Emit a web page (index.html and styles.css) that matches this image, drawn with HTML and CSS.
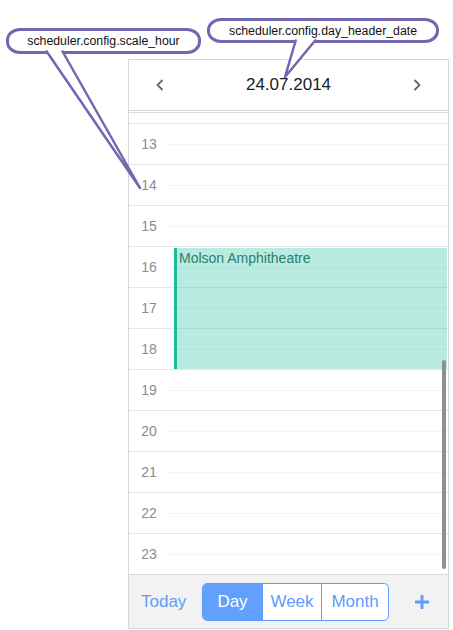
FILE: index.html
```html
<!DOCTYPE html>
<html>
<head>
<meta charset="utf-8">
<link rel="stylesheet" href="styles.css">
</head>
<body>
<div class="scheduler">
  <div class="header">
    <div class="nav"><svg width="8" height="12" viewBox="0 0 8 12"><polyline points="6.5,1 1.5,6 6.5,11" fill="none" stroke="#666" stroke-width="1.8"/></svg></div>
    <div class="date">24.07.2014</div>
    <div class="nav"><svg width="8" height="12" viewBox="0 0 8 12"><polyline points="1.5,1 6.5,6 1.5,11" fill="none" stroke="#666" stroke-width="1.8"/></svg></div>
  </div>
  <div class="body">
    <div class="sep"></div>
    <div class="row partial"></div>
    <div class="row"><div class="hour">13</div><div class="slot"></div></div>
    <div class="row"><div class="hour">14</div><div class="slot"></div></div>
    <div class="row"><div class="hour">15</div><div class="slot"></div></div>
    <div class="row"><div class="hour">16</div><div class="slot"></div></div>
    <div class="row"><div class="hour">17</div><div class="slot"></div></div>
    <div class="row"><div class="hour">18</div><div class="slot"></div></div>
    <div class="row"><div class="hour">19</div><div class="slot"></div></div>
    <div class="row"><div class="hour">20</div><div class="slot"></div></div>
    <div class="row"><div class="hour">21</div><div class="slot"></div></div>
    <div class="row"><div class="hour">22</div><div class="slot"></div></div>
    <div class="row last"><div class="hour">23</div><div class="slot"></div></div>
    <div class="event">Molson Amphitheatre</div>
    <div class="scrollbar"></div>
  </div>
  <div class="footer">
    <div class="today">Today</div>
    <div class="seg">
      <div class="btn day">Day</div>
      <div class="btn week">Week</div>
      <div class="btn month">Month</div>
    </div>
    <div class="plus"><svg width="14" height="14" viewBox="0 0 14 14"><path d="M7 0 V14 M0 7 H14" stroke="#5f9cfb" stroke-width="2.8"/></svg></div>
  </div>
</div>

<div class="callout c1">scheduler.config.scale_hour</div>
<div class="callout c2">scheduler.config.day_header_date</div>
<svg class="tails" width="453" height="630" viewBox="0 0 453 630">
  <path d="M46 50.5 L140 188 L62 50.5" fill="#fff" stroke="#7367b1" stroke-width="2.5" stroke-linejoin="round"/>
  <path d="M296 39.5 L285 77 L316 39.5" fill="#fff" stroke="#7367b1" stroke-width="2.5" stroke-linejoin="round"/>
</svg>
</body>
</html>
```
FILE: styles.css
```css
* { box-sizing: border-box; }
html, body { margin: 0; padding: 0; background: #fff; }
body {
  font-family: "Liberation Sans", Arial, sans-serif;
  position: relative;
  width: 453px;
  height: 630px;
  overflow: hidden;
}
.scheduler {
  margin: 59px 0 0 128px;
  width: 321px;
  border: 1px solid #d8d8d8;
}
.header {
  height: 51px;
  border-bottom: 1px solid #d8d8d8;
  display: flex;
  align-items: center;
}
.nav {
  width: 62px;
  display: flex;
  justify-content: center;
  align-items: center;
}
.nav svg { display: block; }
.date {
  flex: 1;
  text-align: center;
  font-size: 17px;
  color: #1a1a1a;
}
.body { position: relative; }
.sep { height: 1px; margin-top: 1px; background: #dcdcdc; }
.row {
  display: flex;
  height: 41px;
  border-bottom: 1px solid #e6e6e6;
}
.row.partial { height: 11px; }
.row.last { height: 40px; border-bottom: none; }
.hour {
  width: 40px;
  line-height: 40px;
  text-align: center;
  font-size: 14px;
  color: #8c8c8c;
}
.slot { flex: 1; position: relative; }
.slot::after {
  content: "";
  position: absolute;
  left: 0;
  right: 0;
  top: 20px;
  border-top: 1px dotted #e9e9e9;
}
.event {
  position: absolute;
  top: 136px;
  left: 45px;
  right: 1px;
  height: 121px;
  background: rgba(26, 188, 156, 0.3);
  border-left: 3px solid #1abc9c;
  color: #27806e;
  font-size: 14px;
  padding: 2px 0 0 2px;
}
.scrollbar {
  position: absolute;
  top: 248px;
  right: 2px;
  width: 4px;
  height: 209px;
  background: #909090;
  border-radius: 2px;
}
.footer {
  height: 54px;
  border-top: 1px solid #d8d8d8;
  background: #f2f2f2;
  display: flex;
  align-items: center;
  padding-left: 12px;
}
.today {
  width: 61px;
  font-size: 17px;
  color: #5f9cfb;
}
.seg {
  display: flex;
  height: 38px;
  border: 1px solid #5f9cfb;
  border-radius: 5px;
  overflow: hidden;
  background: #fff;
}
.btn {
  display: flex;
  align-items: center;
  justify-content: center;
  font-size: 17px;
  color: #5f9cfb;
}
.btn.day { width: 59px; background: #62a0fd; color: #fff; }
.btn.week { width: 59px; border-left: 1px solid #5f9cfb; }
.btn.month { width: 67px; border-left: 1px solid #5f9cfb; }
.plus { margin-left: auto; margin-right: 19px; display: flex; }
.plus svg { display: block; }
.callout {
  position: absolute;
  border: 3px solid #7367b1;
  border-radius: 14px / 12px;
  background: #fff;
  font-size: 12.3px;
  color: #111;
  display: flex;
  align-items: center;
  justify-content: center;
}
.c1 { left: 6px; top: 28px; width: 195px; height: 26px; }
.c2 { left: 207px; top: 18px; width: 232px; height: 25px; }
.tails {
  position: absolute;
  left: 0;
  top: 0;
  pointer-events: none;
}
```
